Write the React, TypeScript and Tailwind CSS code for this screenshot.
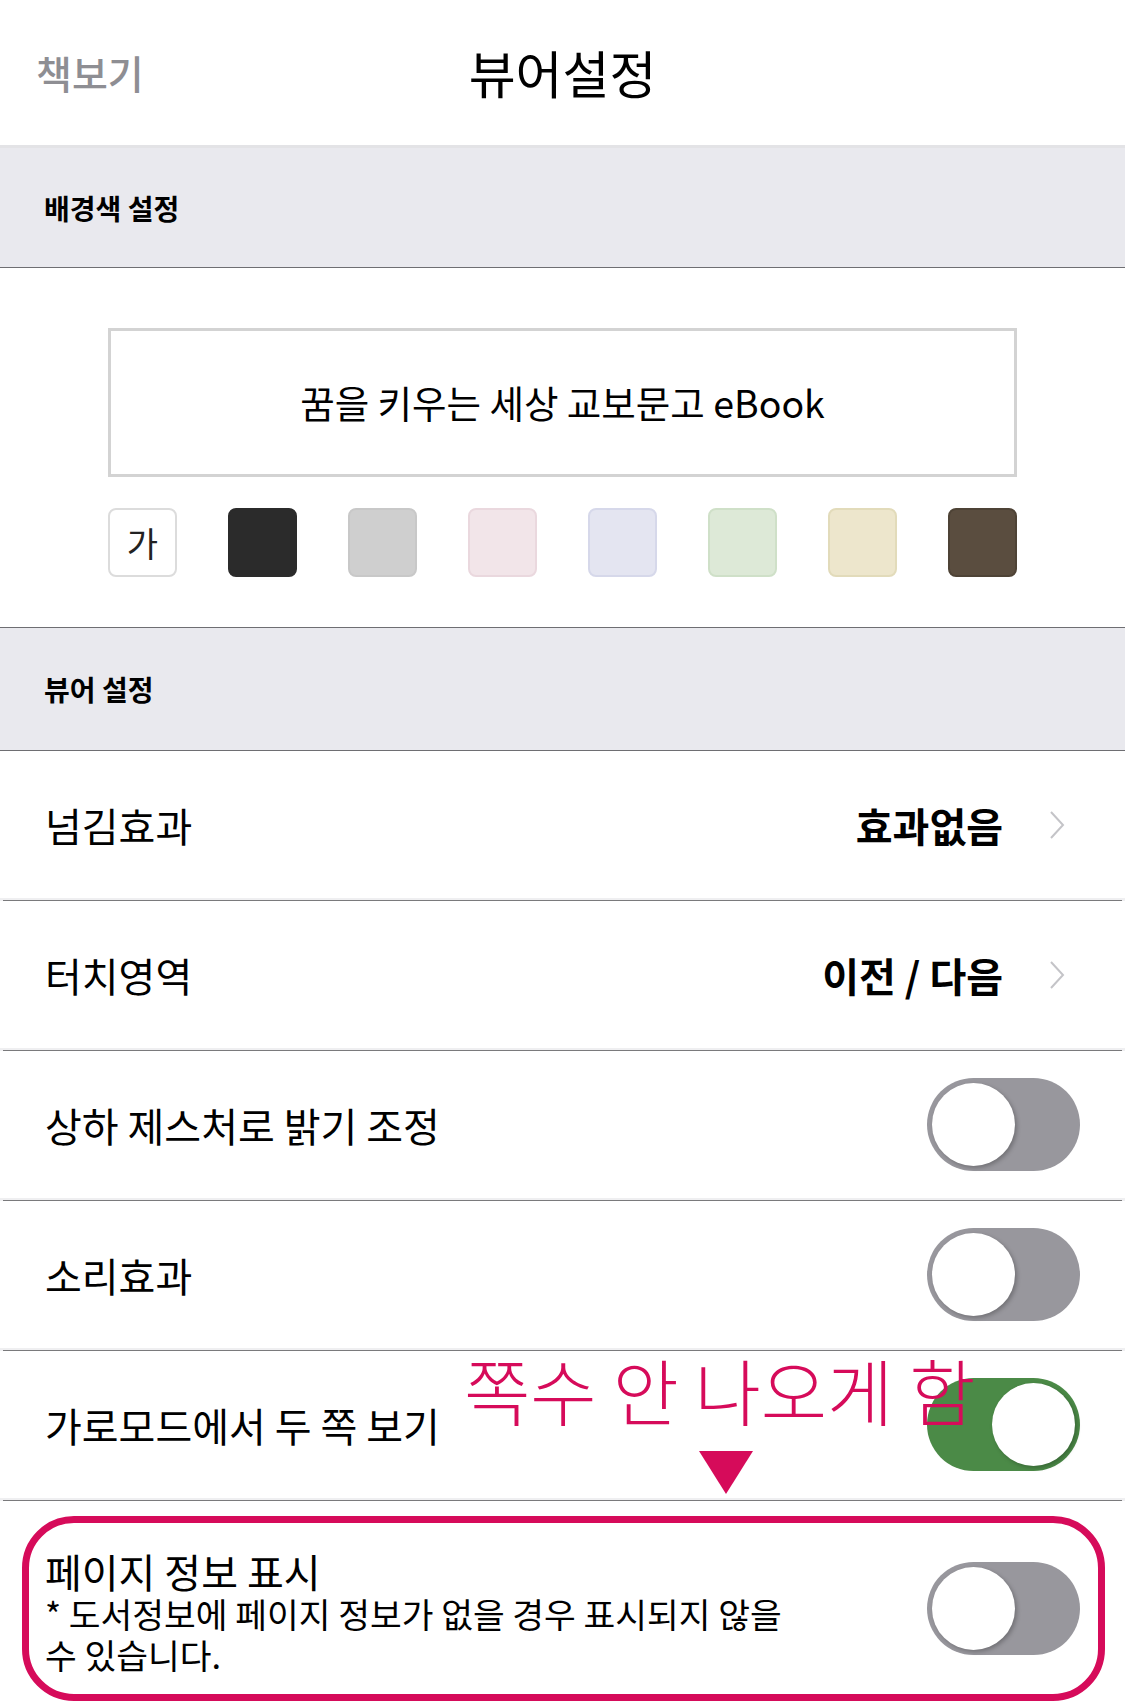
import { useState } from "react";

const swatches = [
  { bg: "bg-white", border: "border-[#dcdcdc]", label: "가" },
  { bg: "bg-[#2b2b2b]", border: "border-[#2b2b2b]" },
  { bg: "bg-[#cfcfcf]", border: "border-[#c8c8c8]" },
  { bg: "bg-[#f2e5e9]", border: "border-[#ead8de]" },
  { bg: "bg-[#e4e5f1]", border: "border-[#d6d8ea]" },
  { bg: "bg-[#dde9d7]", border: "border-[#cfe0c8]" },
  { bg: "bg-[#ede6cc]", border: "border-[#e2dbba]" },
  { bg: "bg-[#5a4d3f]", border: "border-[#4e4336]" },
];

function Toggle({ on }: { on: boolean }) {
  return (
    <div
      className={`flex h-[93px] w-[153px] shrink-0 items-center rounded-full p-[5px] ${
        on ? "justify-end bg-[#4b8a47]" : "justify-start bg-[#98979d]"
      }`}
    >
      <div className="h-[83px] w-[83px] rounded-full bg-white shadow-[2px_2px_4px_rgba(0,0,0,0.25)]" />
    </div>
  );
}

function Chevron() {
  return (
    <svg width="16" height="30" viewBox="0 0 16 30" className="shrink-0">
      <polyline points="2,2 14,15 2,28" fill="none" stroke="#c4c4c8" strokeWidth="2" />
    </svg>
  );
}

function Separator() {
  return (
    <div className="h-[3px] bg-[#efeff1]">
      <div className="mx-[3px] mt-[2px] h-px bg-[#7a7a7c]" />
    </div>
  );
}

function SectionHeader({ title, className }: { title: string; className: string }) {
  return (
    <div className={`flex items-center bg-[#e9e9ee] pl-[44px] ${className}`}>
      <span className="text-[28px] font-bold text-black">{title}</span>
    </div>
  );
}

export default function App() {
  const [landscape] = useState(true);

  return (
    <div className="flex min-h-[1708px] w-[1125px] flex-col bg-white font-['Noto_Sans_CJK_KR','Noto_Sans',sans-serif] text-black">
      {/* Header */}
      <div className="grid h-[145px] grid-cols-[1fr_auto_1fr] items-center">
        <span className="pl-[36px] text-[39px] font-medium text-[#8e8e93]">책보기</span>
        <span className="text-[51px] font-normal">뷰어설정</span>
        <span />
      </div>
      <div className="h-[3px] bg-[#e3e3e6]" />

      <SectionHeader title="배경색 설정" className="h-[120px] border-b border-[#6e6e72]" />

      {/* Background colour */}
      <div className="flex flex-col px-[108px] pb-[50px] pt-[60px]">
        <div className="flex h-[149px] items-center justify-center border-[3px] border-[#d3d3d3]">
          <span className="text-[37.5px]">꿈을 키우는 세상 교보문고 eBook</span>
        </div>
        <div className="mt-[31px] flex justify-between">
          {swatches.map((s, i) => (
            <div
              key={i}
              className={`flex h-[69px] w-[69px] items-center justify-center rounded-[8px] border-2 ${s.bg} ${s.border}`}
            >
              {s.label && <span className="text-[34px] text-[#222]">{s.label}</span>}
            </div>
          ))}
        </div>
      </div>

      <SectionHeader title="뷰어 설정" className="h-[124px] border-y border-[#6e6e72]" />

      {/* Rows */}
      <div className="flex h-[147px] items-center pl-[45px] pr-[60px]">
        <span className="flex-1 text-[40px]">넘김효과</span>
        <span className="mr-[46px] text-[40px] font-bold">효과없음</span>
        <Chevron />
      </div>
      <Separator />
      <div className="flex h-[147px] items-center pl-[45px] pr-[60px]">
        <span className="flex-1 text-[40px]">터치영역</span>
        <span className="mr-[46px] text-[40px] font-bold">이전 / 다음</span>
        <Chevron />
      </div>
      <Separator />
      <div className="flex h-[147px] items-center pl-[45px] pr-[45px]">
        <span className="flex-1 text-[40px]">상하 제스처로 밝기 조정</span>
        <Toggle on={false} />
      </div>
      <Separator />
      <div className="flex h-[147px] items-center pl-[45px] pr-[45px]">
        <span className="flex-1 text-[40px]">소리효과</span>
        <Toggle on={false} />
      </div>
      <Separator />
      <div className="relative flex h-[147px] items-center pl-[45px] pr-[45px]">
        <span className="flex-1 text-[40px]">가로모드에서 두 쪽 보기</span>
        <Toggle on={landscape} />
        {/* annotation */}
        <span className="absolute left-[464px] top-[-4px] text-[72px] leading-[84px] font-light text-[#d60b5a]">
          쪽수 안 나오게 함
        </span>
        <svg width="54" height="43" viewBox="0 0 54 43" className="absolute left-[699px] top-[100px]">
          <polygon points="0,0 54,0 27,43" fill="#d60b5a" />
        </svg>
      </div>
      <Separator />

      <div className="px-[20px] pb-[8px] pl-[22px] pt-[15px]">
        <div className="flex h-[185px] items-center rounded-[52px] border-[7px] border-[#d60b5a] pl-[16px] pr-[18px]">
          <div className="flex flex-1 flex-col pt-[6px]">
            <span className="text-[40px] leading-[44px]">페이지 정보 표시</span>
            <span className="text-[34.5px] leading-[41px]">
              * 도서정보에 페이지 정보가 없을 경우 표시되지 않을
              <br />
              수 있습니다.
            </span>
          </div>
          <Toggle on={false} />
        </div>
      </div>
    </div>
  );
}
